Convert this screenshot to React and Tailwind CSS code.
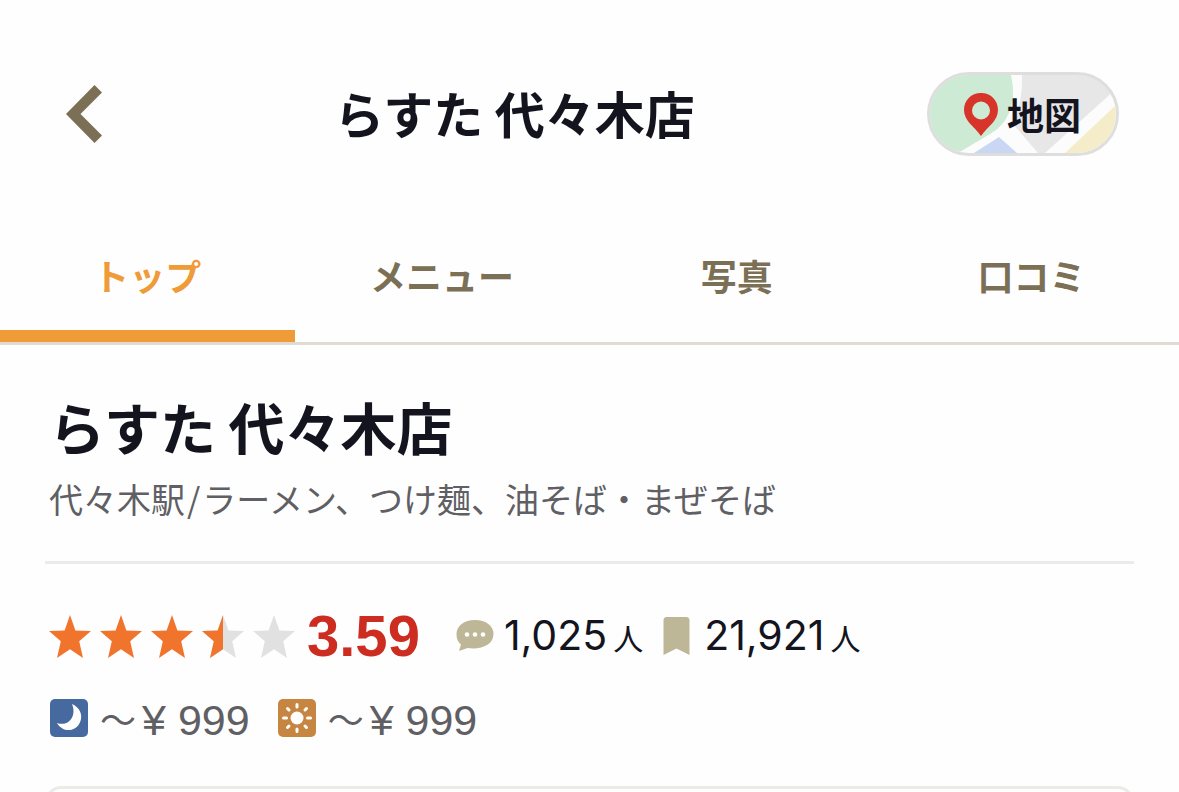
import { useState } from "react";

const TABS = ["トップ", "メニュー", "写真", "口コミ"];
const STAR = "M21 0 L26.4 15.4 L42 16 L30.2 26.3 L34 43 L21 34.3 L8 43 L11.8 26.3 L0 16 L15.6 15.4 Z";

const SHOP = {
  name: "らすた 代々木店",
  station: "代々木駅",
  genres: "ラーメン、つけ麺、油そば・まぜそば",
  score: "3.59",
  reviews: "1,025",
  saves: "21,921",
  budget: "¥ 999",
};

export default function App() {
  return (
    <div className="max-h-screen overflow-hidden bg-[#fefefe] font-['Noto_Sans_CJK_JP',sans-serif] text-[#14141f]">
      <header className="flex h-[228px] items-center justify-between pr-[60px] pl-[66px]">
        <button type="button" aria-label="戻る">
          <svg width="36" height="58" viewBox="0 0 36 58" fill="#7b7055">
            <path d="M28.5 0 L36 7.5 L14.5 29 L36 50.5 L28.5 58 L0 29 Z" />
          </svg>
        </button>
        <h1 className="pb-1 text-[50px] leading-[60px] font-bold">{SHOP.name}</h1>
        <MapButton />
      </header>

      <Tabs />

      <main className="px-[45px]">
        <section className="border-b-[3px] border-[#ebebe9] px-1 pt-[46px] pb-[40px]">
          <h2 className="text-[56px] leading-[70px] font-bold">{SHOP.name}</h2>
          <p className="mt-4 text-[34px] leading-11 text-[#5f5f64]">
            {SHOP.station}<span className="mx-0.5">/</span>{SHOP.genres}
          </p>
        </section>

        <section className="px-1 pt-[42px]">
          <div className="flex h-[60px] items-center">
            <Stars />
            <span className="ml-3 font-['Liberation_Sans',sans-serif] text-[58px] leading-[60px] font-bold text-[#cd2c20]">{SHOP.score}</span>
            <CommentIcon />
            <Count value={SHOP.reviews} />
            <BookmarkIcon />
            <Count value={SHOP.saves} />
          </div>
          <div className="mt-[22px] flex h-[60px] items-center gap-7 px-px">
            <Budget icon={<MoonIcon />} />
            <Budget icon={<SunIcon />} />
          </div>
        </section>

        <div className="mt-[38px] h-20 rounded-2xl border-[3px] border-[#ebebe7]" />
      </main>
    </div>
  );
}

function MapButton() {
  return (
    <button type="button" className="relative flex h-[84px] w-[192px] items-center overflow-hidden rounded-full border-[3px] border-[#dedede] bg-[#e7e7e7] pl-[33px]">
      <svg className="absolute inset-0 h-full w-full" viewBox="0 0 186 78">
        <rect width="186" height="78" fill="#e7e7e7" />
        <path d="M81 0 H92 Q93 28 82 48 L108 78 H20 L60 55 Z" fill="#fcfcfc" />
        <path d="M0 0 H81 Q86 22 79 38 Q73 52 60 59 L28 78 H0 Z" fill="#cdead4" />
        <path d="M44 78 L69 62 L87 78 Z" fill="#c9d7f5" />
        <path d="M115 78 L186 14 V78 Z" fill="#fcfcfc" />
        <path d="M135 78 L186 30 V78 Z" fill="#f5ecca" />
      </svg>
      <svg className="relative" width="36" height="43" viewBox="0 0 36 43" fill="#d8352a">
        <path fillRule="evenodd" d="M18 0 C8 0 1 7.5 1 17 C1 28 11 33 18 43 C25 33 35 28 35 17 C35 7.5 28 0 18 0 Z M18 8.5 A9 9 0 1 0 18 26.5 A9 9 0 1 0 18 8.5 Z" />
      </svg>
      <span className="relative ml-2 text-[37px] leading-10 font-bold">地図</span>
    </button>
  );
}

function Tabs() {
  const [active, setActive] = useState(0);

  return (
    <nav className="flex border-b-[3px] border-[#e0dad3]">
      {TABS.map((tab, i) => (
        <button
          key={tab}
          type="button"
          onClick={() => setActive(i)}
          className={`h-[114px] flex-1 border-b-12 pb-2 text-4xl font-bold ${i === active ? "border-[#ef9b38] text-[#ef9b38]" : "border-transparent text-[#7b7055]"}`}
        >
          {tab}
        </button>
      ))}
    </nav>
  );
}

function Stars() {
  return (
    <div className="flex gap-[9px]" role="img" aria-label={SHOP.score}>
      {[1, 1, 1, 0.5, 0].map((fill, i) => (
        <svg key={i} width="42" height="43" viewBox="0 0 42 43">
          <path d={STAR} fill={fill === 1 ? "#f1742d" : "#e1e1e1"} />
          {fill === 0.5 && <path d="M21 0 V34.3 L8 43 L11.8 26.3 L0 16 L15.6 15.4 Z" fill="#f1742d" />}
        </svg>
      ))}
    </div>
  );
}

function Count({ value }) {
  return (
    <span className="flex items-baseline gap-1.5 leading-[60px]">
      <span className="font-[Inter,sans-serif] text-[41px]">{value}</span>
      <span className="text-[30px]">人</span>
    </span>
  );
}

function Budget({ icon }) {
  return (
    <span className="flex items-center text-[#5f5f64]">
      {icon}
      <span className="ml-3 text-4xl">～</span>
      <span className="ml-1.5 pt-1 font-['Liberation_Sans',sans-serif] text-[43px] leading-[60px]">{SHOP.budget}</span>
    </span>
  );
}

function CommentIcon() {
  return (
    <svg className="mr-2.5 ml-9" width="38" height="32" viewBox="0 0 38 32">
      <path d="M19 0 C8 0 0.5 6 0.5 14 C0.5 19 2 22 5 24.5 L3 31 L11.5 28 C25 30 37.5 25 37.5 14 C37.5 6 30 0 19 0 Z" fill="#bdb798" />
      <g fill="#fff">
        <circle cx="11" cy="14.5" r="2.3" />
        <circle cx="19" cy="14.5" r="2.3" />
        <circle cx="27" cy="14.5" r="2.3" />
      </g>
    </svg>
  );
}

function BookmarkIcon() {
  return (
    <svg className="mr-3.5 ml-5" width="27" height="38" viewBox="0 0 27 38" fill="#bdb798">
      <path d="M3.5 0 H23 Q26.5 0 26.5 3.5 V38 L13.5 31.5 L0.5 38 V3.5 Q0.5 0 3.5 0 Z" />
    </svg>
  );
}

function MoonIcon() {
  return (
    <svg width="38" height="38" viewBox="0 0 38 38">
      <rect width="38" height="38" rx="5" fill="#46699f" />
      <path d="M22 5 C29 8 33 15 30.5 22 C27 33 13 34.5 7 24 C19 28 27 17 22 5 Z" fill="#fff" />
    </svg>
  );
}

function SunIcon() {
  return (
    <svg width="38" height="38" viewBox="0 0 38 38">
      <rect width="38" height="38" rx="5" fill="#c68642" />
      <circle cx="19" cy="19" r="6.5" fill="#fff" />
      <path
        d="M19 5.5 V8 M19 30 V32.5 M5.5 19 H8.5 M29.5 19 H32.5 M9.5 9.5 L11 11 M27 27 L28.5 28.5 M28.5 9.5 L27 11 M11 27 L9.5 28.5"
        stroke="#fff"
        strokeWidth="3"
        strokeLinecap="round"
      />
    </svg>
  );
}
